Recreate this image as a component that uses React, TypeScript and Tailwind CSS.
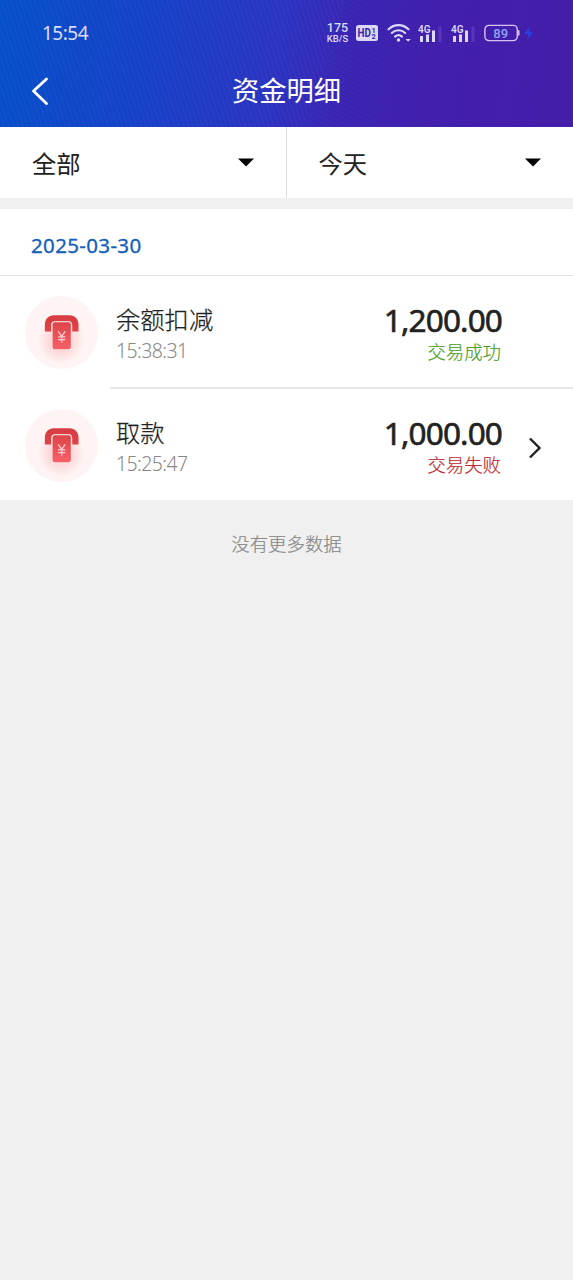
import clsx from "clsx";

const filters = ["全部", "今天"];

const records = [
  {
    title: "余额扣减",
    time: "15:38:31",
    amount: "1,200.00",
    status: "交易成功",
    success: true,
    link: false
  },
  {
    title: "取款",
    time: "15:25:47",
    amount: "1,000.00",
    status: "交易失败",
    success: false,
    link: true
  }
];

const WifiIcon = () => (
  <svg width="24" height="20" viewBox="0 0 24 20" fill="none">
    <g stroke="#dcd8f8" strokeWidth="2.1" strokeLinecap="round">
      <path d="M1.5 6.2C7.3.7 15.7.7 21.5 6.2" />
      <path d="M4.8 10C8.8 6.4 14.2 6.4 18.2 10" />
      <path d="M8 13.6c2.1-1.8 4.9-1.8 7 0" />
    </g>
    <circle cx="11.5" cy="17" r="1.7" fill="#dcd8f8" />
    <path d="M18.6 16h5l-2.5 2.8z" fill="#dcd8f8" />
  </svg>
);

const SignalIcon = () => (
  <svg width="25" height="19" viewBox="0 0 25 19">
    <text
      x="0"
      y="8.6"
      fill="#dcd8f8"
      fontSize="10"
      fontWeight="600"
      fontFamily="Roboto, sans-serif"
      textLength="12.5"
      lengthAdjust="spacingAndGlyphs"
    >
      4G
    </text>
    <path d="M2 12h3v6H2zM8 10.5h3V18H8zM14 6.5h3V18h-3z" fill="#dcd8f8" />
    <path d="M20.5 2.5h3V18h-3z" fill="#5a35b8" />
  </svg>
);

const HdIcon = () => (
  <svg width="22" height="16" viewBox="0 0 22 16">
    <rect width="22" height="16" rx="2.5" fill="#dcd8f8" />
    <g fill="#3a27ae" fontFamily="Roboto, sans-serif" fontWeight="700">
      <text
        x="1.6"
        y="12.3"
        fontSize="12"
        textLength="13.4"
        lengthAdjust="spacingAndGlyphs"
      >
        HD
      </text>
      <text x="15.6" y="7.5" fontSize="7.5">
        1
      </text>
      <text x="15.6" y="14.2" fontSize="7.5">
        2
      </text>
    </g>
  </svg>
);

const BatteryIcon = () => (
  <svg width="51" height="18" viewBox="0 0 51 18">
    <rect
      x="0.9"
      y="1.4"
      width="32.4"
      height="15.2"
      rx="4"
      fill="none"
      stroke="#d5c4ee"
      strokeWidth="1.4"
    />
    <path d="M34.7 6.3v5.2" stroke="#d5c4ee" strokeWidth="1.6" />
    <text
      x="9.3"
      y="13.6"
      fill="#8fa4f5"
      fontSize="13"
      fontWeight="500"
      fontFamily="Roboto, sans-serif"
    >
      89
    </text>
    <path d="M46 2l-6 8h4l-1 6.5 6-8.5h-4z" fill="#2a3fdc" />
  </svg>
);

const WithdrawIcon = ({ id }: { id: string }) => (
  <svg className="shrink-0" width="73" height="73" viewBox="0 0 72 72">
    <defs>
      <linearGradient id={`${id}-slot`} x2="0" y2="1">
        <stop stopColor="#d53c42" />
        <stop offset="1" stopColor="#e24248" />
      </linearGradient>
      <linearGradient id={`${id}-note`} x2="0" y2="1">
        <stop stopColor="#dd454b" />
        <stop offset="1" stopColor="#f76066" />
      </linearGradient>
      <radialGradient id={`${id}-glow`}>
        <stop stopColor="#f9868c" stopOpacity="0.5" />
        <stop offset="1" stopColor="#f9868c" stopOpacity="0" />
      </radialGradient>
    </defs>
    <circle cx="36" cy="36" r="36" fill="#fef4f4" />
    <ellipse cx="35.5" cy="43" rx="23" ry="24" fill={`url(#${id}-glow)`} />
    <path
      d="M19.6 35V28c0-5 3.8-8.9 8.8-8.9H44c5 0 8.8 3.9 8.8 8.9v7h-6.2v-6c0-2.6-1.2-3.8-3.8-3.8H29.6c-2.6 0-3.8 1.2-3.8 3.8v6z"
      fill={`url(#${id}-slot)`}
    />
    <rect x="26.2" y="24.8" width="20" height="28.6" rx="3" fill="#fde3e4" />
    <rect
      x="27.2"
      y="26"
      width="18"
      height="26.6"
      rx="2.2"
      fill={`url(#${id}-note)`}
    />
    <path
      d="M32.8 34.8l3.4 5 3.4-5M32.6 40.3h7.2M32.6 43h7.2M36.2 40v6"
      fill="none"
      stroke="#fbcfd0"
      strokeWidth="1.3"
    />
  </svg>
);

// fine diagonal hatching that changes direction halfway across the header
const HeaderTexture = () => (
  <svg
    className="absolute inset-0"
    width="573"
    height="127"
    viewBox="0 0 573 127"
  >
    <defs>
      <pattern
        id="hatch-steep"
        width="4.5"
        height="8"
        patternUnits="userSpaceOnUse"
        patternTransform="rotate(-18)"
      >
        <path d="M1 0v8" stroke="#5a70ff" strokeOpacity="0.15" />
      </pattern>
      <pattern
        id="hatch-shallow"
        width="4.5"
        height="8"
        patternUnits="userSpaceOnUse"
        patternTransform="rotate(-63)"
      >
        <path d="M1 0v8" stroke="#6a5cff" strokeOpacity="0.14" />
      </pattern>
      <linearGradient id="hatch-fade">
        <stop stopColor="#fff" />
        <stop offset="1" stopColor="#fff" stopOpacity="0" />
      </linearGradient>
      <mask id="hatch-mask">
        <rect x="300" width="180" height="127" fill="url(#hatch-fade)" />
      </mask>
    </defs>
    <path d="M0 0h345l-40 127H0z" fill="url(#hatch-steep)" />
    <path
      d="M345 0h228v127H305z"
      fill="url(#hatch-shallow)"
      mask="url(#hatch-mask)"
    />
  </svg>
);

const StatusBar = () => (
  <div className="flex h-[54px] items-center pt-3 pl-[42px] pr-[38px] text-[#d9dcfb]">
    <span className="flex-1 pt-px text-[19px] font-normal tracking-[-0.5px]">
      15:54
    </span>
    <div className="flex items-center">
      <div className="mr-[7px] w-[23px] text-center font-[Roboto] font-medium">
        <div className="text-[12.5px] leading-[12px]">175</div>
        <div className="text-[9.5px] leading-[10px]">KB/S</div>
      </div>
      <HdIcon />
      <div className="ml-[9px] mr-[7px]">
        <WifiIcon />
      </div>
      <SignalIcon />
      <div className="ml-2 mr-2">
        <SignalIcon />
      </div>
      <BatteryIcon />
    </div>
  </div>
);

const Header = () => (
  <header className="relative h-[127px] bg-[linear-gradient(100deg,#0450c8_0%,#1740c6_28%,#2b33bf_48%,#3b24b2_60%,#421fac_76%,#431ea9_100%)]">
    <HeaderTexture />
    <div className="relative">
      <StatusBar />
      <div className="grid h-[73px] grid-cols-[1fr_auto_1fr] items-center text-white">
        <svg
          className="ml-[31px]"
          width="18"
          height="30"
          viewBox="0 0 18 30"
          fill="none"
        >
          <path
            d="M15.5 3L2.5 15l13 12.5"
            stroke="#fff"
            strokeWidth="2.8"
            strokeLinecap="round"
            strokeLinejoin="round"
          />
        </svg>
        <h1 className="pt-0.5 text-[27.3px] font-normal">资金明细</h1>
      </div>
    </div>
  </header>
);

const Filters = () => (
  <div className="mb-[11px] grid h-[71px] grid-cols-2 bg-white">
    {filters.map((label, index) => (
      <button
        key={label}
        className={clsx(
          "flex items-center justify-between pr-8 pl-8 text-[24.3px] text-[#222]",
          index === 0 && "border-r border-[#ddd]"
        )}
      >
        <span className="pt-[3px]">{label}</span>
        <svg width="16" height="9" viewBox="0 0 16 9">
          <path d="M0 .5h16L8 8.5z" fill="#000" />
        </svg>
      </button>
    ))}
  </div>
);

const App = () => {
  return (
    <div className="min-h-screen bg-[#f0f0f0] font-['Noto_Sans','Noto_Sans_CJK_SC',sans-serif]">
      <Header />
      <Filters />
      <div className="bg-white">
        <div className="flex h-[67px] items-center border-b border-[#e2e2e2] pt-[7px] pl-[31px] text-[20.5px] font-normal tracking-[0.35px] text-[#1160bc] [-webkit-text-stroke:0.3px_#1160bc]">
          2025-03-30
        </div>
        {records.map((record, index) => (
          <div
            key={record.time}
            className="flex h-[113px] pl-[25px] last:h-[111px]"
          >
            <div className="w-[85px] shrink-0 pt-5 last:pt-[19px]">
              <WithdrawIcon id={`record-${index}`} />
            </div>
            <div
              className={clsx(
                "flex flex-1 pl-1.5",
                index < records.length - 1 && "border-b-2 border-[#e8e8e8]"
              )}
            >
              <div className="flex-1 pt-[26px]">
                <div className="text-[24.3px] leading-9 font-light text-[#222] [-webkit-text-stroke:0.25px_#222]">
                  {record.title}
                </div>
                <div className="text-[19.5px] leading-[26px] font-light tracking-[-0.6px] text-[#888]">
                  {record.time}
                </div>
              </div>
              <div className="w-[130px] pt-[26px] text-right">
                <div className="-mr-px text-[31.5px] leading-9 font-normal tracking-[-0.85px] text-[#222] [-webkit-text-stroke:0.6px_#222]">
                  {record.amount}
                </div>
                <div
                  className={clsx(
                    "text-[18.4px] leading-[28px] font-light [-webkit-text-stroke:0.2px_currentColor]",
                    record.success ? "text-[#4b9c1f]" : "text-[#c2272d]"
                  )}
                >
                  {record.status}
                </div>
              </div>
              <div className="w-[72px] pt-12 pl-[27px]">
                {record.link && (
                  <svg width="14" height="22" viewBox="0 0 14 22" fill="none">
                    <path
                      d="M2 1.5l9.5 9.5L2 20.5"
                      stroke="#222"
                      strokeWidth="2.4"
                    />
                  </svg>
                )}
              </div>
            </div>
          </div>
        ))}
      </div>
      <p className="pt-[30px] text-center text-[18.4px] leading-[28px] font-light text-[#888] [-webkit-text-stroke:0.2px_#888]">
        没有更多数据
      </p>
    </div>
  );
};

export default App;
